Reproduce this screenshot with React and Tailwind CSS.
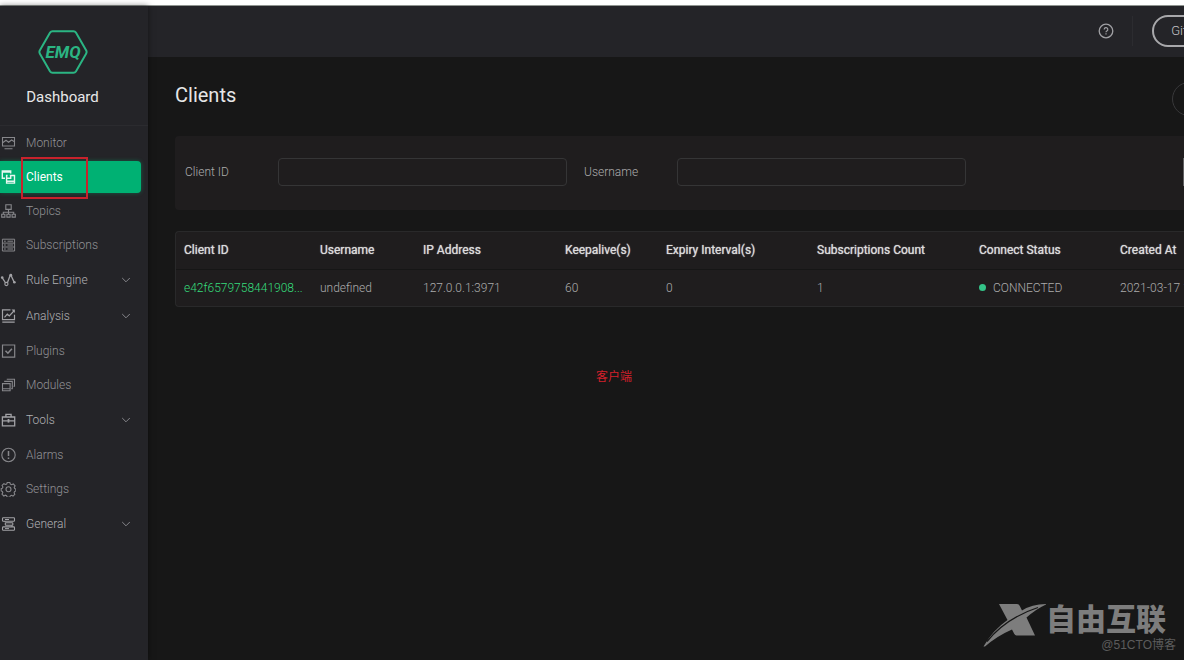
import React from "react";

function Icon({ children }) {
  return (
    <svg
      viewBox="0 0 16 16"
      className="size-4 shrink-0 opacity-90"
      fill="none"
      stroke="currentColor"
      strokeWidth="1.1"
      aria-hidden="true"
    >
      {children}
    </svg>
  );
}

const icons = {
  monitor: (
    <Icon>
      <path d="M2.500 2.500h12v8.500h-12zM4.500 13.700h8M3 7.500l3-2.200 2.600 2 3-2.300 2.400 1.400" />
    </Icon>
  ),
  clients: (
    <Icon>
      <path d="M5 9.300H2.300V1.900h8.400v2.600M2.300 3h8.400" strokeWidth="1.400" />
      <path d="M9.800 6.500h4.700v7.600H6.600V6.500h1M6.600 12.300h7.900M7.200 9.300h3.500V6.800" strokeWidth="1.400" />
    </Icon>
  ),
  topics: (
    <Icon>
      <path d="M5.800 1.800h5.400v4.600H5.800zM8.500 6.400v2.900M3.300 11.200v-2h10.400v2M8.500 9.200v2M1.700 11.200h3.200v2.900H1.700zM6.900 11.200h3.200v2.900H6.900zM12.100 11.200h3.200v2.900h-3.200z" />
    </Icon>
  ),
  subscriptions: (
    <Icon>
      <path d="M2.400 2.200h12.200v11.800H2.400zM2.400 6.100h12.200M2.400 10h12.200M7.500 4.200h5.500M7.500 8h5.500M7.500 12h5.500M4 4.200h1.800M4 8h1.800M4 12h1.800" strokeWidth="1" />
    </Icon>
  ),
  rule: (
    <Icon>
      <path d="M2 5.400l3.600 5.600M7.400 10.800l3-8M10.800 3l3.600 7.600" strokeWidth="1.300" />
      <circle cx="6.400" cy="12" r="1.600" />
      <g fill="currentColor" stroke="none">
        <circle cx="2.200" cy="5.600" r="1.300" />
        <circle cx="10.800" cy="3.200" r="1.400" />
        <circle cx="14.400" cy="10.200" r="1.300" />
      </g>
    </Icon>
  ),
  analysis: (
    <Icon>
      <path d="M10.500 1.800h-8v9.800h12V6.800M2.300 14.200h12.400M4.500 9.400l2.800-3.200 2 1.800 4.600-5" strokeWidth="1.200" />
      <path d="M11.500 1.600h3.400V5z" fill="currentColor" stroke="none" />
    </Icon>
  ),
  plugins: (
    <Icon>
      <path d="M2.500 2h12.200v12.200H2.500z" strokeWidth="1.200" />
      <path d="M5.500 7.800l2.400 2.400 4-4.400" strokeWidth="1.600" />
    </Icon>
  ),
  modules: (
    <Icon>
      <path d="M2.500 6.600h7.600v7.200H2.500zM2.500 11.800h7.600M4.700 5V4.400h7.600v7.200h-1M7.300 2.700v-.5h7.200v7h-1" />
    </Icon>
  ),
  tools: (
    <Icon>
      <path d="M2.400 5h12.300v8.800H2.400zM5.900 4.800V2.400h5.200v2.400M2.400 8.800h12.300" strokeWidth="1.300" />
      <path d="M8.500 7v3.600" strokeWidth="1.800" />
    </Icon>
  ),
  alarms: (
    <Icon>
      <circle cx="8.500" cy="8" r="6.700" />
      <path d="M8.500 4v5M8.500 10.400v1.600" strokeWidth="1.500" />
    </Icon>
  ),
  settings: (
    <Icon>
      <path d="M7.200 1.500h2.600l.6 1.700 1.200.5 1.700-.8 1.800 1.900-.9 1.600.5 1.200 1.100.5v1.900l-1.300.6-.4 1.200.7 1.600-1.800 1.700-1.500-.8-1.200.5-.5 1.400H7.200l-.6-1.500-1.200-.5-1.600.8L2 13.200l.8-1.600-.5-1.200-1.100-.5V7.700l1.200-.5.5-1.200-.8-1.600 1.800-1.700 1.600.8 1.200-.5z" />
      <circle cx="8.500" cy="8.200" r="2.500" />
    </Icon>
  ),
  general: (
    <Icon>
      <rect x="2.500" y="1.800" width="12" height="3.400" rx=".8" />
      <rect x="5.300" y="6.700" width="7.500" height="2.600" rx=".6" />
      <rect x="2.500" y="10.900" width="12" height="3.400" rx=".8" />
      <path d="M5 5.200v1M12 9.400v1.500M5 3.500h4M5 12.600h4" strokeWidth="1" />
    </Icon>
  ),
};

const menu = [
  { label: "Monitor", icon: "monitor" },
  { label: "Clients", icon: "clients", active: true },
  { label: "Topics", icon: "topics" },
  { label: "Subscriptions", icon: "subscriptions" },
  { label: "Rule Engine", icon: "rule", group: true },
  { label: "Analysis", icon: "analysis", group: true },
  { label: "Plugins", icon: "plugins" },
  { label: "Modules", icon: "modules" },
  { label: "Tools", icon: "tools", group: true },
  { label: "Alarms", icon: "alarms" },
  { label: "Settings", icon: "settings" },
  { label: "General", icon: "general", group: true },
];

function MenuItem({ item }) {
  if (item.group) {
    return (
      <li>
        <button
          type="button"
          aria-expanded="false"
          className="flex h-9 w-full items-center gap-[10px] pr-[17px] text-[#b0b0b4]"
        >
          {icons[item.icon]}
          <span className="flex-1 text-left">{item.label}</span>
          <svg viewBox="0 0 10 10" className="size-[10px]" fill="none" stroke="#85858a" aria-hidden="true">
            <path d="M1.200 3L5 6.800 8.800 3" />
          </svg>
        </button>
      </li>
    );
  }
  return (
    <li className="relative flex h-[34px] items-center pr-[7px]">
      <a
        href="#"
        className={
          item.active
            ? "flex h-8 flex-1 items-center gap-[10px] rounded-r bg-[#00b173] font-normal text-white shadow-[0_0_4px_#00b17366]"
            : "flex h-8 flex-1 items-center gap-[10px] text-[#929296]"
        }
      >
        {icons[item.icon]}
        <span>{item.label}</span>
      </a>
      {item.active && (
        <span className="pointer-events-none absolute -top-[3px] left-[21px] h-[42px] w-[67px] border-2 border-[#c8222c]" />
      )}
    </li>
  );
}

function Sidebar() {
  return (
    <aside className="z-10 flex w-37 shrink-0 flex-col bg-[#242428] shadow-[0_0_6px_#00000080]">
      <div className="flex h-[120px] flex-col items-center border-b border-[#2b2b2f] pt-6 pr-[23px]">
        <svg viewBox="0 0 50 44" className="h-11 w-[50px]" role="img" aria-label="EMQ">
          <path
            d="M14.500 1.200h21q1.600 0 2.400 1.300l10.200 17.800q1 1.700 0 3.400L37.900 41.500q-.8 1.300-2.400 1.300h-21q-1.600 0-2.400-1.300L1.900 23.700q-1-1.700 0-3.400L12.100 2.500q.8-1.300 2.400-1.300z"
            fill="none"
            stroke="#2bb583"
            strokeWidth="2"
          />
          <text
            x="25"
            y="28"
            textAnchor="middle"
            fill="#2bb583"
            className="font-['Roboto',sans-serif] text-[17px] font-bold italic"
          >
            EMQ
          </text>
        </svg>
        <p className="mt-[11px] text-[15px] leading-6 font-normal text-[#e8e8e8]">Dashboard</p>
      </div>
      <nav aria-label="Main">
        <ul>
          {menu.map((item) => (
            <MenuItem key={item.label} item={item} />
          ))}
        </ul>
      </nav>
    </aside>
  );
}

function TopBar() {
  return (
    <header className="flex h-[51px] shrink-0 items-center justify-end bg-[#242428] pb-[2px]">
      <button type="button" aria-label="Help" className="text-[#a0a0a4]">
        <svg viewBox="0 0 16 16" className="size-4" fill="none" stroke="currentColor" aria-hidden="true">
          <circle cx="8" cy="8" r="6.800" strokeWidth="1.300" />
          <path d="M6.200 6.500a1.800 1.800 0 1 1 2.700 1.500q-.9.500-.9 1.300M8 10.300v1.300" strokeWidth="1.200" />
        </svg>
      </button>
      <span className="ml-[18px] h-[30px] w-px bg-[#2c2c30]" />
      <button
        type="button"
        className="-mr-[46px] ml-[19px] h-8 w-[78px] shrink-0 rounded-full border-2 border-[#a8a8ab] text-[13px] text-[#c4c4c7]"
      >
        GitHub
      </button>
    </header>
  );
}

function Field({ id, label }) {
  return (
    <div className="flex shrink-0 items-center">
      <label htmlFor={id} className="w-[93px]">
        {label}
      </label>
      <input
        id={id}
        type="text"
        className="h-7 w-[289px] rounded-sm border border-[#353536] bg-transparent px-2 text-[#d0d0d0] outline-none"
      />
    </div>
  );
}

const columns = [
  ["Client ID", "w-[136px]"],
  ["Username", "w-[103px]"],
  ["IP Address", "w-[142px]"],
  ["Keepalive(s)", "w-[101px]"],
  ["Expiry Interval(s)", "w-[151px]"],
  ["Subscriptions Count", "w-[162px]"],
  ["Connect Status", "w-[141px]"],
  ["Created At", "w-[160px]"],
];

function ClientsTable() {
  return (
    <div className="overflow-hidden rounded-l border border-r-0 border-[#29292a] bg-[#1f1d1e]">
      <table className="w-[1096px] min-w-full table-fixed text-left">
        <thead>
          <tr className="h-[37px] border-b border-[#161616] text-[#dcdcdc]">
            {columns.map(([name, width]) => (
              <th
                key={name}
                scope="col"
                className={`${width} px-2 font-normal whitespace-nowrap [text-shadow:0_0_1px_currentColor]`}
              >
                {name}
              </th>
            ))}
          </tr>
        </thead>
        <tbody>
          <tr className="h-[37px] whitespace-nowrap">
            <td className="px-2">
              <a href="#" className="text-[#36dc7c]">
                e42f6579758441908...
              </a>
            </td>
            <td className="px-2">undefined</td>
            <td className="px-2">127.0.0.1:3971</td>
            <td className="px-2">60</td>
            <td className="px-2">0</td>
            <td className="px-2">1</td>
            <td className="px-2">
              <span className="flex items-center gap-[7px]">
                <span className="size-[7px] rounded-full bg-[#34c388]" />
                CONNECTED
              </span>
            </td>
            <td className="px-2">2021-03-17 11:10:25</td>
          </tr>
        </tbody>
      </table>
    </div>
  );
}

function Watermark() {
  return (
    <div className="absolute right-2 bottom-[7px] flex flex-col items-end font-['Liberation_Sans','Noto_Sans_CJK_SC',sans-serif] font-normal">
      <div className="flex items-end pr-[10px] text-[#7d7d7d]">
        <svg viewBox="0 0 64 44" className="-mb-[10px] h-11 w-16" fill="currentColor" aria-hidden="true">
          <path d="M17 1h18q2 0 2.800 2l2.200 4.500Q50 1 65 1 54 6 44.500 14.500L53 32.500H34.500q-1.500 0-2.300-1.800L30 26.500Q15 33 3 43.500H1.500Q11 27 25.500 17z" />
          <path d="M5 38.500Q24 15 56 4.500" fill="none" stroke="#171717" strokeWidth="1.200" />
        </svg>
        <span className="text-[30px] leading-[34px] font-black">自由互联</span>
      </div>
      <p className="text-xs leading-4 text-[#5c5c5c]">@51CTO博客</p>
    </div>
  );
}

export default function App() {
  return (
    <div className="flex min-h-screen flex-col overflow-hidden bg-[#171717] font-['Roboto','Noto_Sans_CJK_SC',sans-serif] text-xs font-light text-[#acacac]">
      <div className="h-[6px] shrink-0 border-b border-[#8f9490] bg-white" />
      <div className="relative flex flex-1">
        <Sidebar />
        <div className="flex min-w-0 flex-1 flex-col overflow-hidden">
          <TopBar />
          <main className="pl-[27px]">
            <div className="flex h-[79px] items-center justify-between pb-1">
              <h1 className="text-xl font-normal text-[#e6e6e6]">Clients</h1>
              <button
                type="button"
                aria-label="Refresh"
                className="-mr-[22px] mt-2 size-[34px] shrink-0 rounded-full border border-[#38383a]"
              />
            </div>
            <form className="flex h-[74px] items-center gap-[17px] rounded-l bg-[#1f1d1e] pb-[2px] pl-[10px]">
              <Field id="client-id" label="Client ID" />
              <Field id="username" label="Username" />
              <button
                type="button"
                aria-label="Search"
                className="-mr-[60px] ml-auto h-7 w-[61px] shrink-0 border border-[#606062]"
              />
            </form>
            <div className="mt-[21px]">
              <ClientsTable />
            </div>
            <p className="mt-[60px] ml-[421px] font-['Noto_Sans_CJK_SC',sans-serif] leading-[18px] font-normal text-[#d3202b]">
              客户端
            </p>
          </main>
        </div>
        <Watermark />
      </div>
    </div>
  );
}
